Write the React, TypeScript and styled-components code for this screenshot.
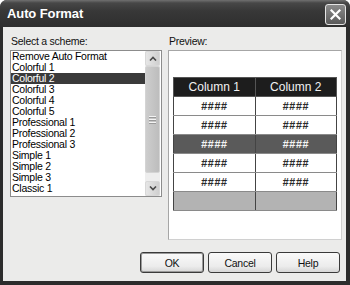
import * as React from 'react';
import styled, {createGlobalStyle} from 'styled-components';

const GlobalStyle = createGlobalStyle`
  html, body {
    margin: 0;
    padding: 0;
    background: #ffffff;
  }
  body {
    font-family: "Liberation Sans", Arial, sans-serif;
    font-size: 10.5px;
    letter-spacing: -0.25px;
  }
`;

const Window = styled.div`
  width: 350px;
  height: 285px;
  display: flex;
  flex-direction: column;
  background: #2c2c2c;
  border-radius: 7px 7px 0 0;
  overflow: hidden;
  box-sizing: border-box;
`;

const TitleBar = styled.div`
  height: 27px;
  flex: none;
  display: flex;
  align-items: center;
  justify-content: space-between;
  padding: 0 4px 0 7px;
  background: linear-gradient(#707070 0, #474747 3px, #383838 40%, #2e2e2e 100%);
`;

const Title = styled.span`
  color: #ffffff;
  font-weight: bold;
  font-size: 13px;
  letter-spacing: -0.1px;
`;

const CloseButton = styled.div`
  width: 19px;
  height: 19px;
  border: 1px solid #e4e4e4;
  border-radius: 3px;
  background: linear-gradient(#8a8a8a, #5a5a5a);
  display: flex;
  align-items: center;
  justify-content: center;
  margin-top: 1px;
`;

const Body = styled.div`
  flex: 1;
  margin: 0 4px 4px 3px;
  background: #ebebea;
  display: flex;
  flex-direction: column;
  padding: 8px 4px 0 7px;
`;

const Main = styled.div`
  display: flex;
  gap: 6px;
`;

const Column = styled.div<{ $width: number }>`
  width: ${p => p.$width}px;
  display: flex;
  flex-direction: column;
  gap: 2px;
`;

const Label = styled.div`
  color: #111;
  line-height: 13px;
  padding-left: 1px;
`;

const ListBox = styled.div`
  height: 147px;
  border: 1px solid #8c8c8c;
  background: #ffffff;
  display: flex;
  box-sizing: border-box;
`;

const Items = styled.div`
  flex: 1;
`;

const Item = styled.div<{ $selected?: boolean }>`
  height: 11px;
  line-height: 11px;
  padding-left: 1px;
  color: ${p => (p.$selected ? '#ffffff' : '#000000')};
  background: ${p => (p.$selected ? '#3a3a3a' : 'transparent')};
  white-space: nowrap;
  cursor: default;
`;

const ScrollBar = styled.div`
  width: 15px;
  margin-right: 1px;
  display: flex;
  flex-direction: column;
  background: #eeeeee;
`;

const ScrollButton = styled.div`
  height: 15px;
  flex: none;
  background: linear-gradient(90deg, #e6e6e6, #cfcfcf);
  border: 1px solid #d8d8d8;
  border-radius: 2px;
  box-sizing: border-box;
  display: flex;
  align-items: center;
  justify-content: center;
`;

const Track = styled.div`
  flex: 1;
  display: flex;
  flex-direction: column;
`;

const Thumb = styled.div`
  height: 107px;
  background: linear-gradient(90deg, #cdcdcd, #bdbdbd);
  border: 1px solid #d4d4d4;
  border-radius: 2px;
  box-sizing: border-box;
  display: flex;
  flex-direction: column;
  align-items: center;
  justify-content: center;
  gap: 1px;
`;

const Grip = styled.div`
  width: 7px;
  height: 1px;
  background: #f4f4f4;
  border-bottom: 1px solid #9a9a9a;
`;

const PreviewBox = styled.div`
  height: 190px;
  border: 1px solid #a6a6a6;
  border-right-color: #d0d0d0;
  border-bottom-color: #d0d0d0;
  background: #ffffff;
  box-sizing: border-box;
  padding: 26px 4px 0 4px;
`;

const Table = styled.table`
  width: 164px;
  border-collapse: collapse;
  table-layout: fixed;
`;

const HeadCell = styled.th`
  height: 18px;
  padding: 0;
  background: #1d1d1d;
  color: #f2f2f2;
  font-weight: normal;
  font-size: 12px;
  letter-spacing: 0;
  border: 1px solid #555;
  text-align: center;
`;

const Cell = styled.td<{ $tone: 'light' | 'dark' | 'total' }>`
  height: 18px;
  padding: 0;
  text-align: center;
  font-weight: bold;
  font-style: italic;
  font-size: 11px;
  letter-spacing: 0.5px;
  color: ${p => (p.$tone === 'dark' ? '#f4f4f4' : '#2a2a2a')};
  background: ${p => (p.$tone === 'dark' ? '#5a5a5a' : p.$tone === 'total' ? '#b3b3b3' : '#ffffff')};
  border: 1px solid #8a8a8a;
  border-left-color: #444;
  border-right-color: #444;
`;

const ButtonRow = styled.div`
  display: flex;
  justify-content: flex-end;
  gap: 4px;
  margin-top: 12px;
  padding-right: 2px;
`;

const Button = styled.div<{ $default?: boolean }>`
  width: 64px;
  height: 21px;
  box-sizing: border-box;
  border: 1px solid #3a3a3a;
  border-radius: 3px;
  background: linear-gradient(#fafafa, #ececec 70%, #d6d6d6);
  box-shadow: ${p => (p.$default ? 'inset 0 0 0 1px #9a9a9a' : 'none')};
  display: flex;
  align-items: center;
  justify-content: center;
  color: #111;
`;

const schemes = [
  'Remove Auto Format',
  'Colorful 1',
  'Colorful 2',
  'Colorful 3',
  'Colorful 4',
  'Colorful 5',
  'Professional 1',
  'Professional 2',
  'Professional 3',
  'Simple 1',
  'Simple 2',
  'Simple 3',
  'Classic 1',
];

const rows: Array<'light' | 'dark' | 'total'> = ['light', 'light', 'dark', 'light', 'light', 'total'];

const Chevron = ({up}: { up?: boolean }) => (
  <svg width="8" height="5" viewBox="0 0 8 5">
    <path d={up ? 'M1 4.5 L4 1.5 L7 4.5' : 'M1 0.5 L4 3.5 L7 0.5'} stroke="#4a4a4a" strokeWidth="1.6" fill="none" />
  </svg>
);

const App = () => {
  const [selected, setSelected] = React.useState('Colorful 2');

  return (
    <>
      <GlobalStyle />
      <Window>
        <TitleBar>
          <Title>Auto Format</Title>
          <CloseButton>
            <svg width="11" height="11" viewBox="0 0 11 11">
              <path d="M1.5 1.5 L9.5 9.5 M9.5 1.5 L1.5 9.5" stroke="#ffffff" strokeWidth="2.2" strokeLinecap="square" />
            </svg>
          </CloseButton>
        </TitleBar>
        <Body>
          <Main>
            <Column $width={152}>
              <Label>Select a scheme:</Label>
              <ListBox>
                <Items>
                  {schemes.map(s => (
                    <Item key={s} $selected={s === selected} onClick={() => setSelected(s)}>{s}</Item>
                  ))}
                </Items>
                <ScrollBar>
                  <ScrollButton><Chevron up /></ScrollButton>
                  <Track>
                    <Thumb>
                      <Grip /><Grip /><Grip />
                    </Thumb>
                  </Track>
                  <ScrollButton><Chevron /></ScrollButton>
                </ScrollBar>
              </ListBox>
            </Column>
            <Column $width={174}>
              <Label>Preview:</Label>
              <PreviewBox>
                <Table>
                  <thead>
                    <tr>
                      <HeadCell>Column 1</HeadCell>
                      <HeadCell>Column 2</HeadCell>
                    </tr>
                  </thead>
                  <tbody>
                    {rows.map((tone, i) => (
                      <tr key={i}>
                        <Cell $tone={tone}>{tone === 'total' ? '' : '####'}</Cell>
                        <Cell $tone={tone}>{tone === 'total' ? '' : '####'}</Cell>
                      </tr>
                    ))}
                  </tbody>
                </Table>
              </PreviewBox>
            </Column>
          </Main>
          <ButtonRow>
            <Button $default>OK</Button>
            <Button>Cancel</Button>
            <Button>Help</Button>
          </ButtonRow>
        </Body>
      </Window>
    </>
  );
};

export default App;
